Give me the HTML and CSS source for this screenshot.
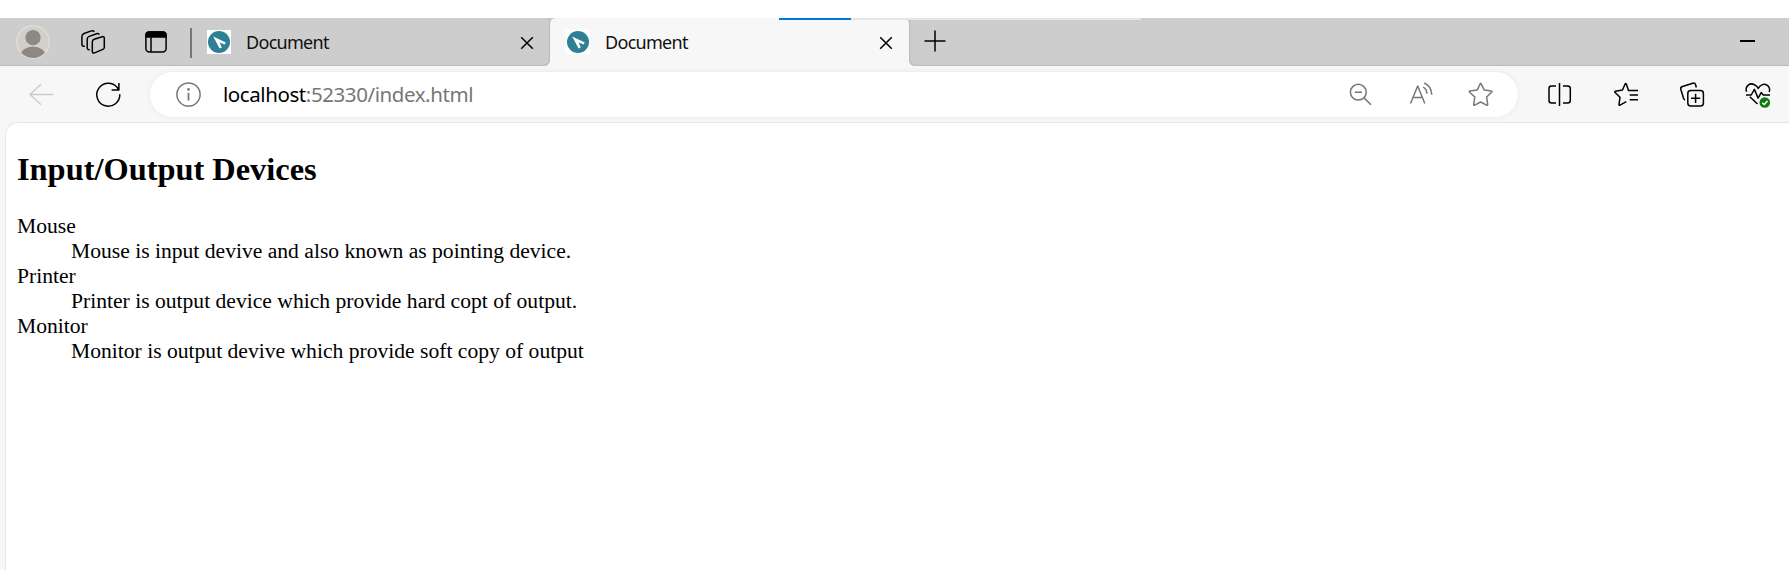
FILE: index.html
```html
<!DOCTYPE html>
<html lang="en">
<head>
<meta charset="utf-8">
<title>Document</title>
<link rel="stylesheet" href="styles.css">
</head>
<body>
<div class="browser">
  <header class="tabstrip">
    <div class="strip strip-left">
      <svg class="avatar" viewBox="0 0 34 34"><defs><clipPath id="av"><circle cx="17" cy="17" r="16"/></clipPath></defs><circle cx="17" cy="17" r="16.2" fill="#d2cfca" stroke="#e0ddd9"/><circle cx="17" cy="12.7" r="7.6" fill="#8d8884"/><ellipse cx="17" cy="31" rx="12.5" ry="9.5" fill="#8d8884" clip-path="url(#av)"/></svg>
      <svg class="icon workspaces" viewBox="0 0 24 24"><path d="M13.2 9.3 21.2 6.7Q23.3 6.2 23.3 8.3V17.2Q23.3 18.8 21.8 19.4L13.6 22.9Q11.3 23.7 11.3 21.4V12Q11.3 10 13.2 9.3ZM8.8 19.6Q6.2 20.2 6.2 17.6V9.3Q6.2 7.2 8.2 6.4L15.6 3.7Q17.6 3.1 18.3 4.6M3.8 16.2Q.9 16.5.9 14V6.5Q.9 4.3 3 3.5L10.4.9Q12.4.3 13.2 1.8"/></svg>
      <svg class="icon panes" viewBox="0 0 24 24"><rect x="1.9" y="1.9" width="20.2" height="20.2" rx="3.5"/><path d="M2 7V5Q2 2 5 2H19Q22 2 22 5V7Z" fill="#000"/><path d="M7 7V22"/></svg>
      <span class="divider"></span>
      <svg class="favicon" viewBox="0 0 24 24"><rect width="24" height="24" fill="#fff"/><circle cx="12" cy="12" r="11" fill="#2f7f95"/><path d="M6.2 6.4 18.8 12.6 17.7 14.6 12.6 12.4 14.8 17.6 12.6 18.6Z" fill="#fff"/></svg>
      <span class="title">Document</span>
      <svg class="close" viewBox="0 0 14 14"><path d="M1.2 1.2 12.8 12.8M12.8 1.2 1.2 12.8"/></svg>
    </div>
    <div class="tab-seat">
      <div class="tab">
        <svg class="favicon" viewBox="0 0 24 24"><rect width="24" height="24" fill="#fff"/><circle cx="12" cy="12" r="11" fill="#2f7f95"/><path d="M6.2 6.4 18.8 12.6 17.7 14.6 12.6 12.4 14.8 17.6 12.6 18.6Z" fill="#fff"/></svg>
        <span class="title">Document</span>
        <svg class="close" viewBox="0 0 14 14"><path d="M1.2 1.2 12.8 12.8M12.8 1.2 1.2 12.8"/></svg>
      </div>
    </div>
    <div class="strip strip-right">
      <svg class="plus" viewBox="0 0 22 22"><path d="M11 .5V21.5M.5 11H21.5"/></svg>
      <span class="minimize"></span>
    </div>
    <div class="progress"><div class="progress-value"></div></div>
  </header>
  <nav class="toolbar">
    <svg class="tool back" viewBox="0 0 25 25"><path d="M24.5 12.5H1M12 2.2 1 12.5 12 22.8"/></svg>
    <svg class="tool reload" viewBox="0 0 25 25"><path d="M23.8 12.3A11.5 11.5 0 1 1 21 5.2L22.8 7.8M22.9 1V8.1H15.6"/></svg>
    <div class="address">
      <svg class="tool info" viewBox="0 0 25 25"><circle cx="12.5" cy="12.5" r="11.6"/><path d="M12.5 10.8V18.5" stroke-width="1.8"/><circle cx="12.5" cy="7.4" r=".6" fill="#666"/></svg>
      <span class="url"><span class="host">localhost</span>:52330/index.html</span>
      <div class="actions">
        <svg class="tool" viewBox="0 0 25 25"><circle cx="10.3" cy="10.2" r="7.9"/><path d="M6.8 10.2H14M16 15.9 23 22.8"/></svg>
        <svg class="tool" viewBox="0 0 25 25"><path d="M2.5 21.5 9.7 4 16.8 21.5M5 15.4H14.4M15.2 5.2Q18.7 7 19 11.8M16.2 1Q23.4 4 23.8 12.8"/></svg>
        <svg class="tool" viewBox="0 0 25 25"><path d="M12.2 1.8Q12.7.9 13.2 1.8L16.3 8.1 23.4 9.1Q24.5 9.4 23.7 10.2L18.6 15 19.7 22.5Q19.7 23.7 18.6 23.2L12.6 20 6.6 23.2Q5.5 23.6 5.7 22.4L6.8 15 1.6 10.2Q.8 9.4 2 9.1L9.2 8.1Z"/></svg>
      </div>
    </div>
    <div class="side">
      <svg class="tool" viewBox="0 0 25 25"><path d="M9 4H4.5Q2 4 2 6.5V18.5Q2 21 4.5 21H9M16 4H20.5Q23.3 4 23.3 6.5V18.5Q23.3 21 20.5 21H16M12.5 1V24"/></svg>
      <svg class="tool" viewBox="0 0 25 25"><path d="M16.7 8.5H15.5L13.3 2Q12.7.8 12.1 2L9.5 8 2.5 9.3Q1.3 9.6 2.1 10.5L7 15.2 6 22.3Q5.9 23.7 7 23.1L13.3 19.7M16.7 8.5H25M16.7 13.1H25M16.7 17.7H25"/></svg>
      <svg class="tool" viewBox="0 0 25 25"><rect x="8.8" y="8.6" width="15.6" height="15.4" rx="3"/><path d="M16.6 11.8V20.9M12 16.3H21.2M17.3 5.5 16.7 3Q16 .7 13.8 1.2L3.5 4.5Q1.3 5.2 1.8 7.2L4.5 16.3Q5 17.6 6 18"/></svg>
      <svg class="tool" viewBox="0 0 25 25"><path d="M1.5 9.8C-.3 4 5.2.2 9.5 2.8Q12 4 13.2 6.4C15.5 2.5 19.2 1.4 22 3.2Q25.7 5.8 24.2 10M1 13H6.2L9.4 7.3 13.1 16.1 16.2 10.6 18.3 13H25M4.8 14.7 12.5 22"/><circle cx="19.8" cy="20.5" r="5.3" fill="#107c10" stroke="none"/><path d="M17.2 20.7 19.2 22.5 22.5 18.9" stroke="#fff"/></svg>
    </div>
  </nav>
  <div class="viewport">
    <main class="page">
      <h2>Input/Output Devices</h2>
      <dl>
        <dt>Mouse</dt>
        <dd>Mouse is input devive and also known as pointing device.</dd>
        <dt>Printer</dt>
        <dd>Printer is output device which provide hard copt of output.</dd>
        <dt>Monitor</dt>
        <dd>Monitor is output devive which provide soft copy of output</dd>
      </dl>
    </main>
  </div>
</div>
</body>
</html>
```
FILE: styles.css
```css
* { box-sizing: border-box; }
body { margin: 0; padding-top: 18px; height: 588px; background: #fff; overflow: hidden; }
svg { display: block; flex: none; fill: none; stroke: #000; stroke-width: 1.5; stroke-linejoin: round; overflow: visible; }
.favicon, .avatar { stroke: none; }
.browser { height: 552px; background: #f7f7f7; display: flex; flex-direction: column; }

.tabstrip { position: relative; display: flex; height: 48px; flex: none; }
.strip { display: flex; align-items: center; background: #cdcdcd; }
.strip-left { width: 550px; border-radius: 0 0 6px 0; box-shadow: inset -1px -1px 1px #bbb; padding: 0 16px; }
.strip-right { flex: 1; border-radius: 0 0 0 6px; box-shadow: inset 1px -1px 1px #bbb; padding: 0 34px 0 15px; }
.tab-seat { width: 359px; background: linear-gradient(#cdcdcd 8px, #f7f7f7 8px); }
.tab { display: flex; align-items: center; height: 48px; padding: 0 16px; border-radius: 6px 6px 0 0; background: #f7f7f7; }
.avatar { width: 34px; height: 34px; }
.icon { width: 24px; height: 24px; }
.workspaces { margin-left: 31px; }
.panes { margin-left: 39px; }
.divider { width: 2px; height: 30px; margin: 2px 15px 0 22px; background: #777; }
.favicon { width: 24px; height: 24px; }
.title { margin: -1px 0 0 15px; font: 18px/24px "Noto Sans", "Open Sans", sans-serif; color: #111; flex: 1; letter-spacing: -0.7px; }
.close { width: 14px; height: 14px; margin-top: 1px; }
.plus { width: 22px; height: 22px; margin-top: -2px; }
.minimize { width: 15px; height: 2px; margin: -2px 0 0 auto; background: #000; }
.progress { position: absolute; left: 779px; top: 0; width: 362px; height: 2px; background: #e5e5e5; }
.progress-value { width: 72px; height: 2px; background: #0078d7; }

.toolbar { display: flex; align-items: center; height: 56px; flex: none; padding: 6px 19px 5px 29px; }
.tool { width: 25px; height: 25px; }
.back { stroke: #ccc; }
.reload { margin-left: 42px; }
.address { display: flex; align-items: center; flex: 1; height: 45px; margin-left: 29px; padding: 0 25px 0 26px; border-radius: 23px; background: #fff; box-shadow: 0 0 5px #e6e6e6; }
.info, .actions .tool { stroke: #767676; }
.url { flex: 1; margin: -1px 0 0 22px; font: 20.5px/28px "Noto Sans", "Open Sans", sans-serif; letter-spacing: -0.42px; color: #767676; }
.host { color: #000; }
.actions { display: flex; gap: 35px; }
.side { display: flex; gap: 41px; margin-left: 29px; }

.viewport { flex: 1; padding-left: 5px; }
.page { height: 100%; border: solid #e6e6e6; border-width: 1px 0 0 1px; border-radius: 13px 0 0 0; background: #fff; padding: 28px 11px 0; font: 21.6px/25px "Liberation Serif", "Times New Roman", serif; color: #000; }
.page h2 { margin: 0; font-size: 32.4px; line-height: 37px; }
.page dl { margin: 26px 0 0; }
.page dd { margin-left: 54px; }
```
